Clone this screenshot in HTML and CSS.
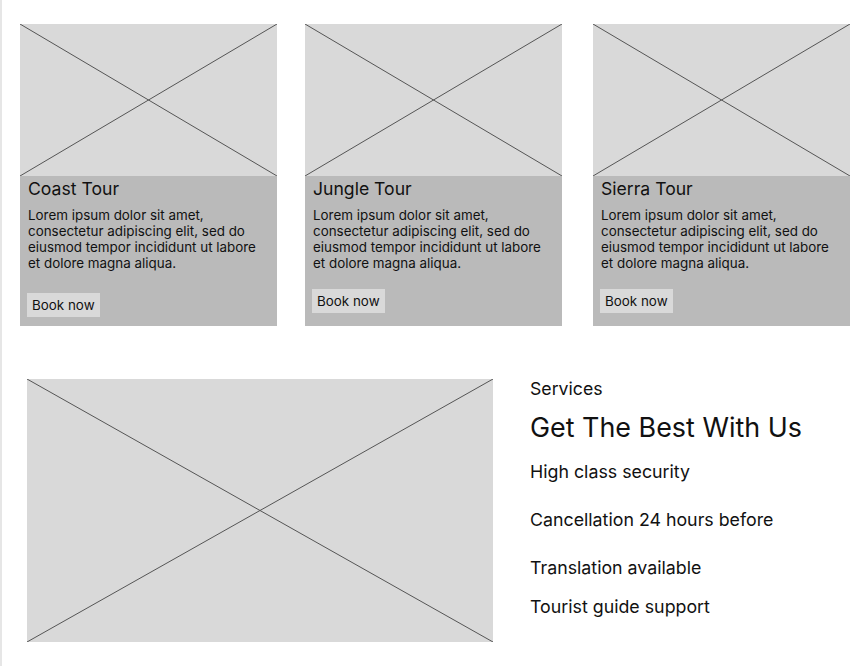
FILE: index.html
```html
<!DOCTYPE html>
<html lang="en">
<head>
<meta charset="utf-8">
<title>Tours</title>
<link rel="stylesheet" href="styles.css">
</head>
<body>
<main class="page">
  <section class="tours">
    <article class="card">
      <div class="ph ph-card"><svg viewBox="0 0 100 100" preserveAspectRatio="none"><line x1="0" y1="0" x2="100" y2="100"/><line x1="100" y1="0" x2="0" y2="100"/></svg></div>
      <div class="card-body">
        <h2 class="card-title">Coast Tour</h2>
        <p class="card-text">Lorem ipsum dolor sit amet, consectetur adipiscing elit, sed do eiusmod tempor incididunt ut labore et dolore magna aliqua.</p>
        <button class="btn btn-low">Book now</button>
      </div>
    </article>
    <article class="card">
      <div class="ph ph-card"><svg viewBox="0 0 100 100" preserveAspectRatio="none"><line x1="0" y1="0" x2="100" y2="100"/><line x1="100" y1="0" x2="0" y2="100"/></svg></div>
      <div class="card-body">
        <h2 class="card-title">Jungle Tour</h2>
        <p class="card-text">Lorem ipsum dolor sit amet, consectetur adipiscing elit, sed do eiusmod tempor incididunt ut labore et dolore magna aliqua.</p>
        <button class="btn">Book now</button>
      </div>
    </article>
    <article class="card card-last">
      <div class="ph ph-card"><svg viewBox="0 0 100 100" preserveAspectRatio="none"><line x1="0" y1="0" x2="100" y2="100"/><line x1="100" y1="0" x2="0" y2="100"/></svg></div>
      <div class="card-body">
        <h2 class="card-title">Sierra Tour</h2>
        <p class="card-text">Lorem ipsum dolor sit amet, consectetur adipiscing elit, sed do eiusmod tempor incididunt ut labore et dolore magna aliqua.</p>
        <button class="btn">Book now</button>
      </div>
    </article>
  </section>
  <section class="services">
    <div class="ph ph-big"><svg viewBox="0 0 100 100" preserveAspectRatio="none"><line x1="0" y1="0" x2="100" y2="100"/><line x1="100" y1="0" x2="0" y2="100"/></svg></div>
    <div class="services-text">
      <p class="eyebrow">Services</p>
      <h1 class="headline">Get The Best With Us</h1>
      <ul class="features">
        <li class="f1">High class security</li>
        <li class="f2">Cancellation 24 hours before</li>
        <li class="f3">Translation available</li>
        <li class="f4">Tourist guide support</li>
      </ul>
    </div>
  </section>
</main>
</body>
</html>
```

FILE: styles.css
```css
* { box-sizing: border-box; }
html, body { margin: 0; padding: 0; background: #ffffff; }
body {
  font-family: Inter, "Liberation Sans", sans-serif;
  color: #111111;
  border-left: 2px solid #e6e6e6;
  min-height: 666px;
}
.page { padding: 24px 0 0 18px; }
.tours {
  display: flex;
  gap: 28px;
  width: 830px;
}
.card { width: 257px; display: flex; flex-direction: column; }
.card-last { margin-left: 3px; }
.ph { background: #d9d9d9; position: relative; }
.ph svg { display: block; width: 100%; height: 100%; }
.ph line { stroke: #555555; stroke-width: 1; vector-effect: non-scaling-stroke; }
.ph-card { height: 152px; }
.card-body {
  background: #bababa;
  height: 150px;
  padding: 2px 7px 0 8px;
  display: flex;
  flex-direction: column;
  align-items: flex-start;
}
.card-title { margin: 0; font-size: 17.6px; font-weight: 400; line-height: 22px; }
.card-text { margin: 6.5px 0 0; font-size: 13.4px; line-height: 16.3px; }
.btn {
  margin: 17px 0 0 -1px;
  background: #d9d9d9;
  border: none;
  font-family: inherit;
  font-size: 13.4px;
  line-height: 16px;
  padding: 4px 5px;
  color: #111111;
}
.btn-low { margin-top: 21px; }
.services {
  display: flex;
  margin-top: 53px;
  padding-left: 7px;
}
.ph-big { width: 466px; height: 263px; flex: none; }
.services-text { margin-left: 37px; }
.eyebrow { margin: 0; font-size: 17.7px; line-height: 20px; }
.headline { margin: 12px 0 0; font-size: 26.9px; font-weight: 400; line-height: 32px; }
.features { list-style: none; margin: 0; padding: 0; font-size: 17.8px; line-height: 20px; }
.features li { margin: 0; }
.f1 { margin-top: 19px !important; }
.f2 { margin-top: 28px !important; }
.f3 { margin-top: 28px !important; }
.f4 { margin-top: 19px !important; }
```
